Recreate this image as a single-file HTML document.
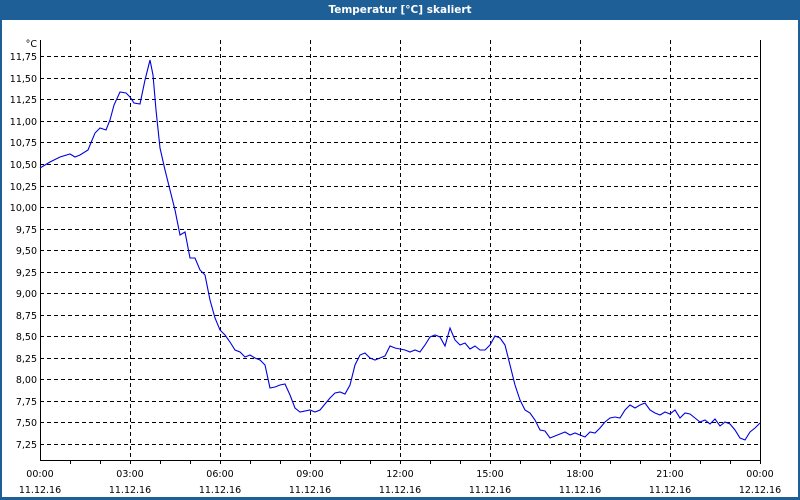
<!DOCTYPE html>
<html><head><meta charset="utf-8"><style>
body{margin:0;width:800px;height:500px;overflow:hidden;background:#fff;font-family:"DejaVu Sans","Liberation Sans",sans-serif}
</style></head><body>
<svg width="800" height="500" xmlns="http://www.w3.org/2000/svg" style="position:absolute;left:0;top:0">
<rect x="0" y="0" width="800" height="500" fill="#1e5f97"/>
<rect x="2" y="20" width="796" height="477" fill="#fff"/>
<text x="400" y="13" fill="#fff" font-size="10.5" font-weight="bold" text-anchor="middle" font-family="DejaVu Sans, sans-serif">Temperatur [°C] skaliert</text>
<g stroke="#000" stroke-width="1" stroke-dasharray="4,3" fill="none">
<path d="M40 56.5H760M40 78.5H760M40 99.5H760M40 121.5H760M40 142.5H760M40 164.5H760M40 186.5H760M40 207.5H760M40 229.5H760M40 250.5H760M40 272.5H760M40 293.5H760M40 315.5H760M40 336.5H760M40 358.5H760M40 379.5H760M40 401.5H760M40 422.5H760M40 444.5H760"/>
<path d="M130.5 40V460M220.5 40V460M310.5 40V460M400.5 40V460M490.5 40V460M580.5 40V460M670.5 40V460"/>
</g>
<path d="M40.5 40V460.5H760.5V40" stroke="#000" fill="none"/>
<path d="M70.5 461v3M100.5 461v3M130.5 461v3M160.5 461v3M190.5 461v3M220.5 461v3M250.5 461v3M280.5 461v3M310.5 461v3M340.5 461v3M370.5 461v3M400.5 461v3M430.5 461v3M460.5 461v3M490.5 461v3M520.5 461v3M550.5 461v3M580.5 461v3M610.5 461v3M640.5 461v3M670.5 461v3M700.5 461v3M730.5 461v3M760.5 461v3" stroke="#000"/>
<g font-size="9.5" fill="#000" text-anchor="end">
<text x="37" y="47">°C</text>
<text x="37" y="60">11,75</text><text x="37" y="82">11,50</text><text x="37" y="103">11,25</text><text x="37" y="125">11,00</text><text x="37" y="146">10,75</text><text x="37" y="168">10,50</text><text x="37" y="190">10,25</text><text x="37" y="211">10,00</text><text x="37" y="233">9,75</text><text x="37" y="254">9,50</text><text x="37" y="276">9,25</text><text x="37" y="297">9,00</text><text x="37" y="319">8,75</text><text x="37" y="340">8,50</text><text x="37" y="362">8,25</text><text x="37" y="383">8,00</text><text x="37" y="405">7,75</text><text x="37" y="426">7,50</text><text x="37" y="448">7,25</text>
</g>
<g font-size="9.5" fill="#000" text-anchor="middle">
<text x="40" y="477">00:00</text><text x="130" y="477">03:00</text><text x="220" y="477">06:00</text><text x="310" y="477">09:00</text><text x="400" y="477">12:00</text><text x="490" y="477">15:00</text><text x="580" y="477">18:00</text><text x="670" y="477">21:00</text><text x="760" y="477">00:00</text>
<text x="40" y="493">11.12.16</text><text x="130" y="493">11.12.16</text><text x="220" y="493">11.12.16</text><text x="310" y="493">11.12.16</text><text x="400" y="493">11.12.16</text><text x="490" y="493">11.12.16</text><text x="580" y="493">11.12.16</text><text x="670" y="493">11.12.16</text><text x="760" y="493">12.12.16</text>
</g>
<polyline fill="none" stroke="#0000e0" stroke-width="1.1" points="40,168 50,162 60,157 70,154 75,157 80,155 88,150 95,133 100,128 106,130 110,120 114,105 120,92 126,93 130,97 134,103 140,104 145,80 150,60 153,75 156,110 160,148 165,170 170,190 175,210 180,235 185,232 190,258 195,258 200,270 205,275 210,300 215,318 220,330 225,335 230,342 235,350 240,352 245,357 250,355 255,358 260,360 265,365 270,388 275,387 280,385 285,384 290,395 295,408 300,412 310,410 315,412 320,410 330,398 335,393 340,392 345,394 350,385 355,365 360,355 365,353 370,358 375,360 380,358 385,356 390,346 395,348 400,349 405,350 410,352 415,350 420,352 425,345 430,337 435,335 440,337 445,346 450,328 455,340 460,345 465,343 470,349 475,346 480,350 485,350 490,345 495,336 500,338 505,345 510,365 515,385 520,400 525,410 530,413 535,420 540,430 545,431 550,438 555,436 560,434 565,432 570,435 575,433 580,435 585,437 590,432 595,433 600,428 605,422 610,418 615,417 620,418 625,410 630,405 635,408 640,405 645,403 650,410 655,413 660,415 665,412 670,414 675,410 680,418 685,413 690,414 695,418 700,422 705,420 710,424 715,419 720,426 725,422 730,424 735,430 740,438 745,440 750,432 755,428 760,423"/>
</svg>
</body></html>
